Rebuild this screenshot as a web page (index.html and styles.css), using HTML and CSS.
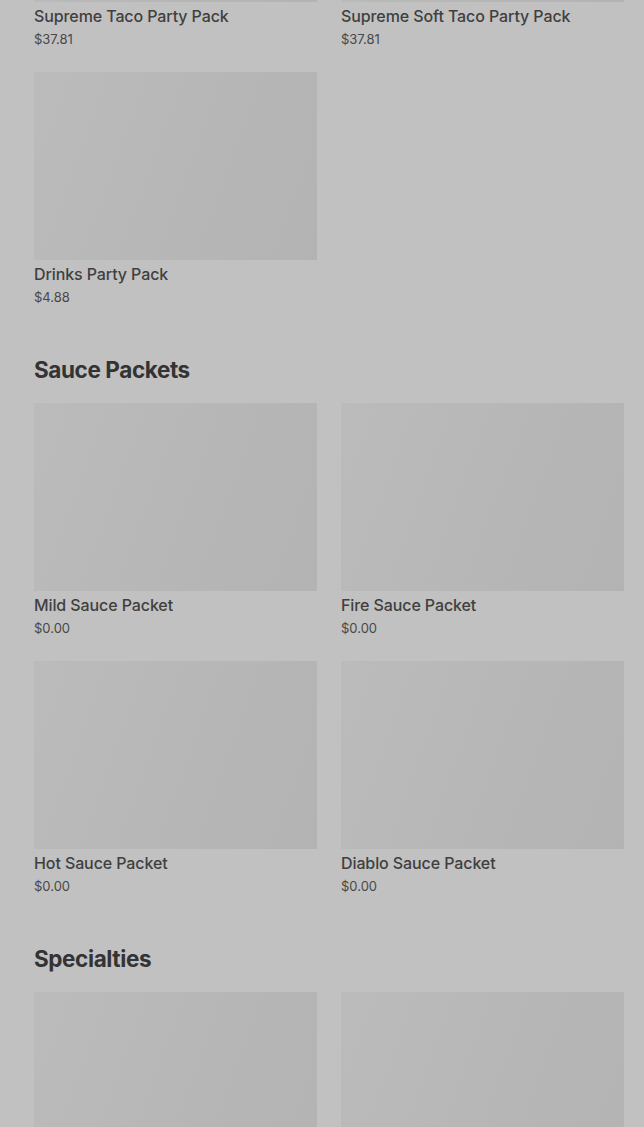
FILE: index.html
```html
<!DOCTYPE html>
<html>
<head>
    <meta charset="UTF-8">
    <title>Menu</title>
    <link rel="stylesheet" href="styles.css">
</head>
<body>
<div id="menu">
    <!-- 派对套餐（页面已向下滚动） -->
    <section class="section first">
        <ul class="grid">
            <li class="item">
                <div class="pic"></div>
                <p class="name">Supreme Taco Party Pack</p>
                <p class="price">$37.81</p>
            </li>
            <li class="item">
                <div class="pic"></div>
                <p class="name">Supreme Soft Taco Party Pack</p>
                <p class="price">$37.81</p>
            </li>
            <li class="item">
                <div class="pic"></div>
                <p class="name">Drinks Party Pack</p>
                <p class="price">$4.88</p>
            </li>
        </ul>
    </section>

    <section class="section">
        <h2>Sauce Packets</h2>
        <ul class="grid">
            <li class="item">
                <div class="pic"></div>
                <p class="name">Mild Sauce Packet</p>
                <p class="price">$0.00</p>
            </li>
            <li class="item">
                <div class="pic"></div>
                <p class="name">Fire Sauce Packet</p>
                <p class="price">$0.00</p>
            </li>
            <li class="item">
                <div class="pic"></div>
                <p class="name">Hot Sauce Packet</p>
                <p class="price">$0.00</p>
            </li>
            <li class="item">
                <div class="pic"></div>
                <p class="name">Diablo Sauce Packet</p>
                <p class="price">$0.00</p>
            </li>
        </ul>
    </section>

    <section class="section">
        <h2>Specialties</h2>
        <ul class="grid">
            <li class="item">
                <div class="pic"></div>
            </li>
            <li class="item">
                <div class="pic"></div>
            </li>
        </ul>
    </section>
</div>
</body>
</html>
```

FILE: styles.css
```css
html,body{
    margin: 0;
    padding: 0;
}
body{
    background: #c1c1c1;
    font-family: Inter, "Noto Sans", sans-serif;
    color: #3e3e3e;
    overflow: hidden;
    height: 1127px;
}
ul,li{
    margin: 0;
    padding: 0;
    list-style: none;
}
p{
    margin: 0;
}
#menu{
    padding: 0 20px 0 34px;
    /* 模拟滚动位置 */
    margin-top: -186px;
}
.section h2{
    margin: 47px 0 17px;
    font-size: 22.5px;
    line-height: 32px;
    font-weight: 700;
    letter-spacing: -0.4px;
    color: #333;
}
.grid{
    display: grid;
    grid-template-columns: 1fr 1fr;
    column-gap: 24px;
    row-gap: 23px;
}
.pic{
    height: 188px;
    background: linear-gradient(110deg, #bbbbbb 0%, #b7b7b7 50%, #b3b3b3 100%);
}
.name{
    margin-top: 4px;
    font-size: 16px;
    line-height: 20px;
    font-weight: 500;
    color: #3f3f3f;
    letter-spacing: -0.1px;
}
.price{
    margin-top: 3px;
    font-size: 13px;
    line-height: 20px;
    color: #484848;
}
```
